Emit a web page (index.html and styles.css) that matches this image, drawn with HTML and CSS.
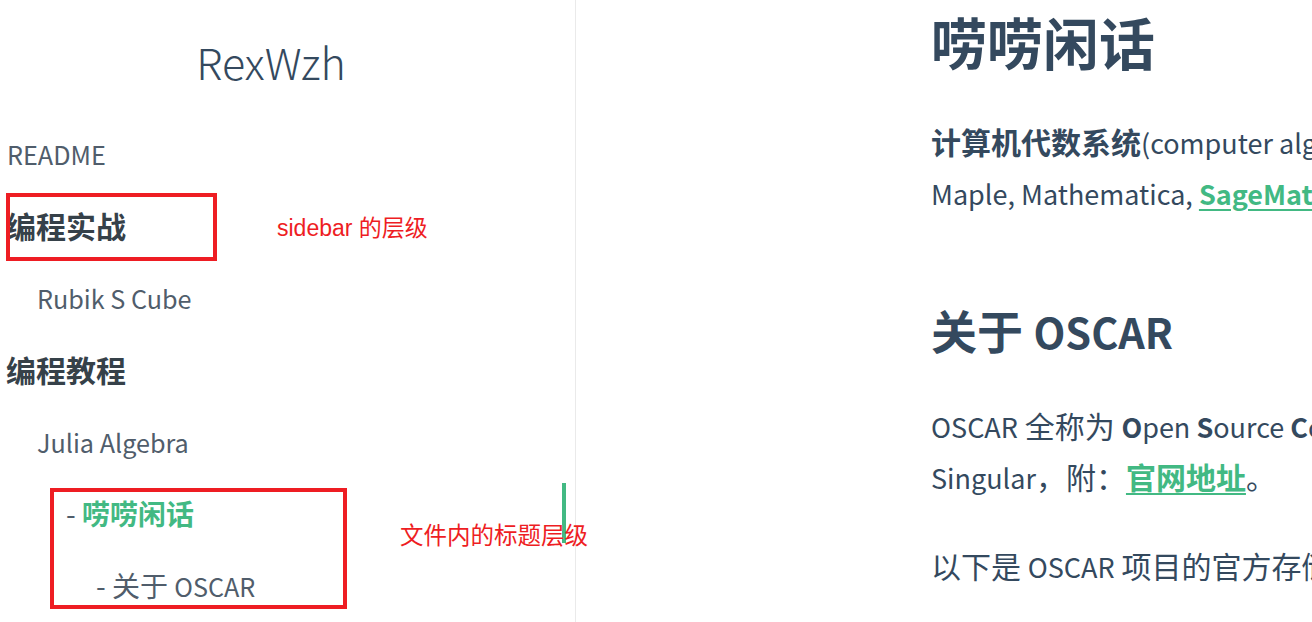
FILE: index.html
```html
<!DOCTYPE html>
<html lang="zh-CN">
<head>
<meta charset="utf-8">
<title>唠唠闲话 - RexWzh</title>
<link rel="stylesheet" href="styles.css">
</head>
<body>
<aside class="sidebar">
  <h1 class="app-name">RexWzh</h1>
  <ul class="nav">
    <li class="item lvl0"><a class="link"><span class="en">README</span></a></li>
    <li class="item lvl0 group"><p class="group-title">编程实战</p></li>
    <li class="item lvl1"><a class="link"><span class="en">Rubik S Cube</span></a></li>
    <li class="item lvl0 group"><p class="group-title">编程教程</p></li>
    <li class="item lvl1"><a class="link"><span class="en">Julia Algebra</span></a></li>
    <li class="item lvl2 active"><a class="link"><span class="dash">- </span><span class="hl">唠唠闲话</span></a></li>
    <li class="item lvl3"><a class="link">- 关于 <span class="en">OSCAR</span></a></li>
  </ul>
  <div class="mark mark-one"></div>
  <div class="mark mark-two"></div>
  <span class="note note-one">sidebar 的层级</span>
  <span class="note note-two">文件内的标题层级</span>
</aside>
<main class="content">
  <h1 class="title">唠唠闲话</h1>
  <p class="para"><span class="line"><strong>计算机代数系统</strong><span class="en">(computer algebra system, CAS)</span> 是一种能够进行符号运算的软件，常见的有</span><br><span class="line"><span class="en">Maple, Mathematica, <a class="ref">SageMath</a></span> 等。</span></p>
  <h2 class="subtitle">关于 <span class="en">OSCAR</span></h2>
  <p class="para"><span class="line"><span class="en">OSCAR</span> 全称为 <span class="en"><strong>O</strong>pen <strong>S</strong>ource <strong>C</strong>omputer <strong>A</strong>lgebra <strong>R</strong>esearch system</span>，整合了 <span class="en">GAP, Polymake, Antic</span> 以及</span><br><span class="line"><span class="en">Singular</span>，附：<a class="ref">官网地址</a>。</span></p>
  <p class="para last"><span class="line">以下是 <span class="en">OSCAR</span> 项目的官方存储库：</span></p>
</main>
</body>
</html>
```
FILE: styles.css
```css
html, body {
  margin: 0;
  padding: 0;
  height: 622px;
  overflow: hidden;
  background: #fff;
}
body {
  display: flex;
  font-family: "Noto Sans CJK SC", "Noto Sans", sans-serif;
  color: #34495e;
}
.en {
  font-size: 0.9em;
  line-height: 1;
}
.sidebar {
  position: relative;
  width: 575px;
  flex: none;
  border-right: 1px solid #eaeaea;
  box-sizing: content-box;
}
.app-name {
  margin: 34px 0 0;
  width: 542px;
  text-align: center;
  font-size: 43px;
  line-height: 54px;
  font-weight: 300;
  color: #34495e;
}
.nav {
  list-style: none;
  margin: 29px 0 0;
  padding: 0;
  width: 566px;
  display: flex;
  flex-direction: column;
}
.item {
  margin: 6px 0;
  height: 60px;
}
.link {
  display: block;
  font-size: 28px;
  line-height: 60px;
  color: #505d6b;
  white-space: nowrap;
}
.group-title {
  margin: 0;
  font-size: 30px;
  line-height: 60px;
  font-weight: 700;
  color: #364149;
}
.lvl0 { padding-left: 7px; }
.group { padding-left: 6px; }
.lvl1 { padding-left: 37px; }
.lvl2 { padding-left: 66px; }
.lvl3 { padding-left: 96px; }
.active .link {
  border-right: 4px solid #42b983;
}
.dash {
  color: #505d6b;
}
.hl {
  color: #42b983;
  font-weight: 700;
}
.mark {
  position: absolute;
  border: 4px solid #ee1d23;
  box-sizing: border-box;
}
.mark-one { left: 6px; top: 193px; width: 211px; height: 68px; }
.mark-two { left: 50px; top: 488px; width: 297px; height: 121px; }
.note {
  position: absolute;
  font-family: "Liberation Sans", "Noto Sans CJK SC", sans-serif;
  font-size: 23px;
  line-height: 30px;
  color: #ee1d23;
  white-space: nowrap;
}
.note-one { left: 277px; top: 213px; }
.note-two { left: 400px; top: 521px; font-size: 23.5px; }
.content {
  flex: 1;
  min-width: 0;
  overflow: hidden;
  padding-left: 355px;
}
.title {
  margin: 6px 0 0;
  font-size: 56px;
  line-height: 70px;
  font-weight: 700;
  white-space: nowrap;
}
.subtitle {
  margin: 83px 0 0;
  font-size: 46px;
  line-height: 56px;
  font-weight: 700;
  white-space: nowrap;
}
.para {
  margin: 40px 0 0;
  font-size: 30px;
  line-height: 51px;
  white-space: nowrap;
}
.subtitle + .para { margin-top: 43px; }
.para.last { margin-top: 38px; }
.para strong { font-weight: 700; }
.ref {
  color: #42b983;
  font-weight: 700;
  text-decoration: underline;
  text-decoration-thickness: 2px;
  text-underline-offset: 4px;
}
```
